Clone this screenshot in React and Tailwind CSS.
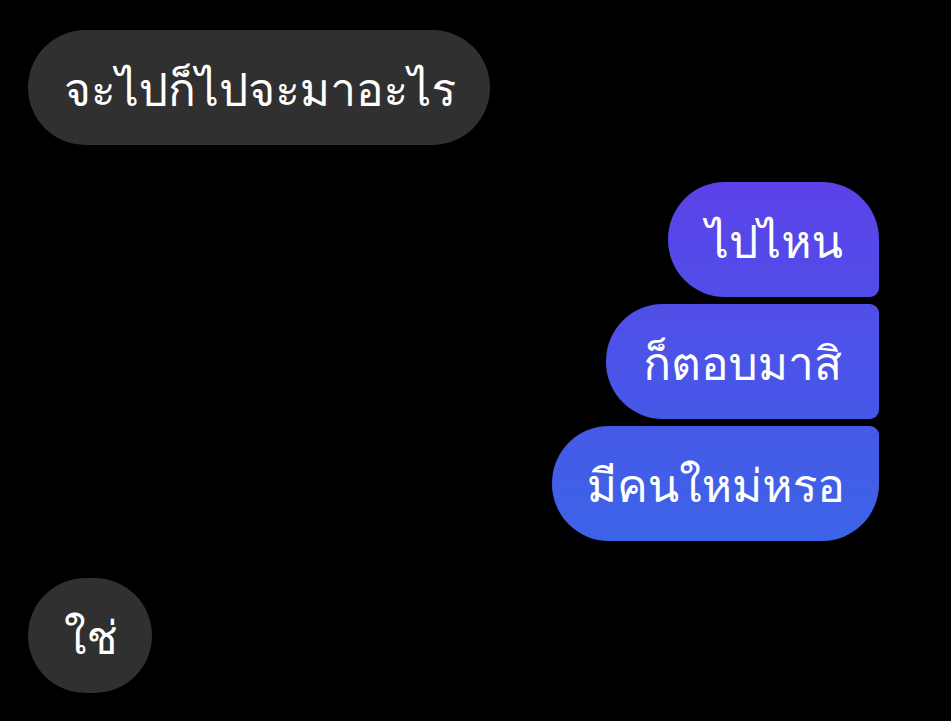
import React from "react";

const Theirs = ({ text }) => (
  <div className="w-fit h-[115px] flex items-center pl-[36px] pr-[34px] pt-[4px] rounded-full bg-[#303030] text-white text-[46px] leading-none">
    {text}
  </div>
);

const App = () => {
  return (
    <div className="min-h-screen bg-black pt-[30px] pl-[28px] pr-[72px] flex flex-col font-['Loma','Liberation_Sans',sans-serif]">
      <Theirs text="จะไปก็ไปจะมาอะไร" />

      {/* my messages, gradient runs across the whole group */}
      <div className="mt-[37px] flex flex-col items-end gap-[7px]">
        <div className="h-[115px] flex items-center pl-[38px] pr-[36px] pt-[4px] rounded-[57px] rounded-br-[9px] bg-linear-to-b from-[#5b42e8] to-[#514de8] text-white text-[46px] leading-none">
          ไปไหน
        </div>
        <div className="h-[115px] flex items-center px-[37px] pt-[4px] rounded-l-[57px] rounded-r-[9px] bg-linear-to-b from-[#504fe8] to-[#4658e8] text-white text-[46px] leading-none">
          ก็ตอบมาสิ
        </div>
        <div className="h-[115px] flex items-center pl-[35px] pr-[34px] pt-[4px] rounded-[57px] rounded-tr-[9px] bg-linear-to-b from-[#455ae8] to-[#3c63e7] text-white text-[46px] leading-none">
          มีคนใหม่หรอ
        </div>
      </div>

      <div className="mt-[37px]">
        <Theirs text="ใช่" />
      </div>
    </div>
  );
};

export default App;
